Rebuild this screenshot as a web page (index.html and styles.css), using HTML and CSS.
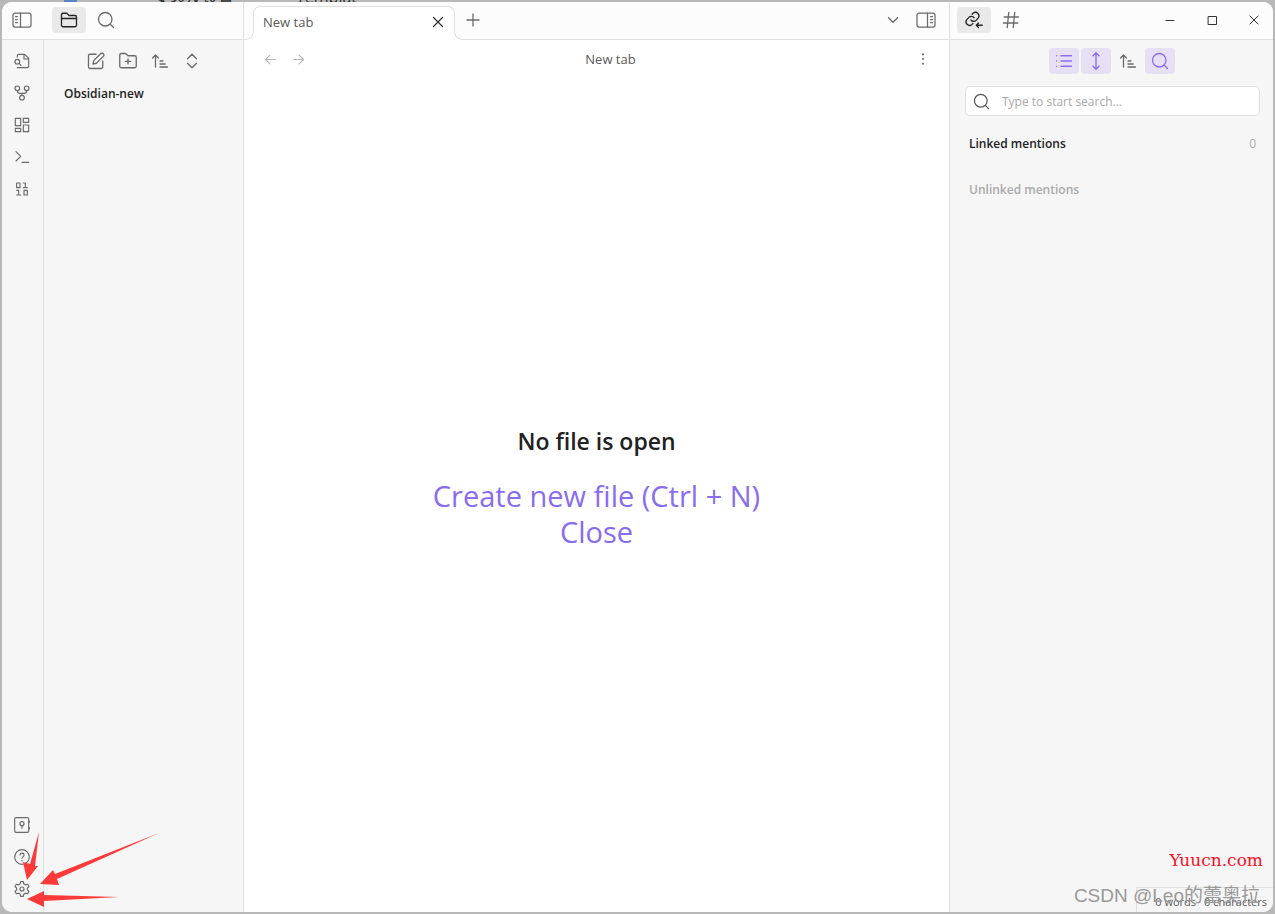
FILE: index.html
```html
<!DOCTYPE html>
<html lang="en">
<head>
<meta charset="utf-8">
<title>New tab - Obsidian-new</title>
<link rel="stylesheet" href="styles.css">
</head>
<body>
<svg class="sprite" aria-hidden="true">
  <symbol id="search" viewBox="0 0 24 24"><circle cx="11" cy="11" r="9"/><path d="m22 22-4.5-4.5"/></symbol>
  <symbol id="sort" viewBox="0 0 24 24"><path d="m2 8 4-4 4 4M6 4v16M12 12h4M12 16h7M12 20h10"/></symbol>
  <symbol id="close" viewBox="0 0 24 24"><path d="M18 6 6 18M6 6l12 12"/></symbol>
</svg>
<div class="desktop" aria-hidden="true"><i class="behind-window"></i><span class="behind-file">安装及设置</span><span class="behind-tab">Templat</span></div>
<div class="app">
  <section class="left">
    <header class="bar left-bar">
      <button class="icon panel" aria-label="Collapse left sidebar"><svg viewBox="0 0 20 18"><rect x="1" y="2" width="18" height="14" rx="2"/><path d="M8.500 2v14M3.500 5.500h2M3.500 8.500h2M3.500 11.500h2"/></svg></button>
      <button class="icon tab-icon active" aria-label="Files"><svg viewBox="0 0 24 24"><path d="M2 10h20M4 21h16a2 2 0 0 0 2-2V8a2 2 0 0 0-2-2h-8l-2-2.200A2 2 0 0 0 8.500 3H4a2 2 0 0 0-2 2v14a2 2 0 0 0 2 2Z"/></svg></button>
      <button class="icon tab-icon" aria-label="Search"><svg><use href="#search"/></svg></button>
    </header>
    <div class="left-body">
      <nav class="ribbon">
        <button class="icon" aria-label="Open quick switcher"><svg viewBox="0 0 24 24"><path d="M5 6V4a2 2 0 0 1 2-2h9l6 6v12a2 2 0 0 1-2 2H5M15 2v7h7M8 16l2.500 2.500"/><circle cx="5" cy="13" r="3.500"/></svg></button>
        <button class="icon" aria-label="Open graph view"><svg viewBox="0 0 24 24"><circle cx="12" cy="19" r="3.500"/><circle cx="5" cy="5" r="3.500"/><circle cx="19" cy="5" r="3.500"/><path d="M5 8.500c0 3 1 4 4 4h6c3 0 4-1 4-4M12 12.500v3"/></svg></button>
        <button class="icon" aria-label="Create new canvas"><svg viewBox="0 0 24 24"><path d="M2 2h8v11H2zM14 2h8v6h-8zM14 12h8v10h-8zM2 17h8v5H2z"/></svg></button>
        <button class="icon" aria-label="Open command palette"><svg viewBox="0 0 24 24"><path d="m3 18 7-7-7-7M12 20h10"/></svg></button>
        <button class="icon" aria-label="Insert template"><svg viewBox="0 0 24 24"><path d="M4 3h5v7H4zM15 14h5v7h-5zM4 21h6M4 14h3v7M14 10h6M14 3h3v7"/></svg></button>
        <span class="spacer"></span>
        <button class="icon" aria-label="Open another vault"><svg viewBox="0 0 24 24"><rect x="1" y="1" width="21" height="22" rx="2"/><circle cx="12" cy="10" r="3"/><path d="M12 13v4M23 6v2M23 16v2"/></svg></button>
        <button class="icon" aria-label="Help"><svg viewBox="0 0 24 24"><circle cx="12" cy="12" r="11"/><path d="M9 9a3 3 0 0 1 6 .500c0 2-3 2.500-3 4.500M12 17v1"/></svg></button>
        <button class="icon" aria-label="Settings"><svg viewBox="0 0 24 24"><path d="M10 1h4l.8 3.500 2.200 1.300 3.500-1 2 3.500-2.500 2.500v2.400l2.500 2.500-2 3.500-3.500-1-2.200 1.300L14 23h-4l-.8-3.500L7 18.200l-3.500 1-2-3.500L4 13.200v-2.400L1.500 8.300l2-3.500 3.500 1 2.200-1.300Z"/><circle cx="12" cy="12" r="3"/></svg></button>
      </nav>
      <div class="files">
        <div class="tools">
          <button class="icon" aria-label="New note"><svg viewBox="0 0 24 24"><path d="M12 3H4a2 2 0 0 0-2 2v15a2 2 0 0 0 2 2h15a2 2 0 0 0 2-2v-8M18.500 2a2.500 2.500 0 0 1 3.500 3.500L12.500 15 8 16l1-4.500Z"/></svg></button>
          <button class="icon" aria-label="New folder"><svg viewBox="0 0 24 24"><path d="M3 21h18a2 2 0 0 0 2-2V7a2 2 0 0 0-2-2h-9l-2-2.200A2 2 0 0 0 8.500 2H3a2 2 0 0 0-2 2v15a2 2 0 0 0 2 2ZM12 9v7M8.500 12.500h7"/></svg></button>
          <button class="icon" aria-label="Change sort order"><svg><use href="#sort"/></svg></button>
          <button class="icon" aria-label="Expand all"><svg viewBox="0 0 24 24"><path d="m6 9 6-6 6 6M6 15l6 6 6-6"/></svg></button>
        </div>
        <h2 class="vault">Obsidian-new</h2>
      </div>
    </div>
  </section>

  <main class="main">
    <header class="bar main-bar">
      <div class="tab"><span>New tab</span><button class="icon tab-close" aria-label="Close tab"><svg><use href="#close"/></svg></button></div>
      <button class="icon" aria-label="New tab"><svg viewBox="0 0 24 24"><path d="M12 4v16M4 12h16"/></svg></button>
      <span class="spacer"></span>
      <button class="icon" aria-label="Tab list"><svg viewBox="0 0 24 24"><path d="m6 9 6 6 6-6"/></svg></button>
      <button class="icon panel" aria-label="Collapse right sidebar"><svg viewBox="0 0 20 18"><rect x="1" y="2" width="18" height="14" rx="2"/><path d="M11.500 2v14M14.500 5.500h2M14.500 8.500h2M14.500 11.500h2"/></svg></button>
    </header>
    <div class="view-header">
      <button class="icon faint" aria-label="Back"><svg viewBox="0 0 24 24"><path d="m11 19-7-7 7-7M20 12H4"/></svg></button>
      <button class="icon faint" aria-label="Forward"><svg viewBox="0 0 24 24"><path d="m13 5 7 7-7 7M4 12h16"/></svg></button>
      <span class="view-title">New tab</span>
      <button class="icon more" aria-label="More options"><svg viewBox="0 0 24 24"><path d="M12 5v.1M12 12v.1M12 19v.1"/></svg></button>
    </div>
    <div class="empty">
      <h1>No file is open</h1>
      <a href="#new">Create new file (Ctrl + N)</a>
      <a href="#close-tab">Close</a>
    </div>
  </main>

  <aside class="right">
    <header class="bar right-bar">
      <button class="icon tab-icon active" aria-label="Backlinks"><svg viewBox="0 0 24 24"><path d="M8 12a4.500 4.500 0 0 0 6.800.500l2.700-3A4.700 4.700 0 0 0 11 2.800L9.500 4.300M12 9a4.500 4.500 0 0 0-6.800-.500l-2.700 3A4.700 4.700 0 0 0 9 18.200l1.500-1.500M23 19h-8M18 16l-3 3 3 3"/></svg></button>
      <button class="icon tab-icon" aria-label="Tags"><svg viewBox="0 0 24 24"><path d="M3 8h19M2 16h19M9 2 7 22M17 2l-2 20"/></svg></button>
      <span class="spacer"></span>
      <button class="win" aria-label="Minimize"><svg viewBox="0 0 12 12"><path d="M2 6.500h8"/></svg></button>
      <button class="win" aria-label="Maximize"><svg viewBox="0 0 12 12"><path d="M2.500 2.500h8v8h-8z"/></svg></button>
      <button class="win" aria-label="Close window"><svg viewBox="0 0 12 12"><path d="m2 2 8 8M10 2l-8 8"/></svg></button>
    </header>
    <div class="tools links-tools">
      <button class="icon on" aria-label="Collapse results"><svg viewBox="0 0 24 24"><path d="M8 5h14M8 12h14M8 19h14M2 5h.1M2 12h.1M2 19h.1"/></svg></button>
      <button class="icon on" aria-label="Show more context"><svg viewBox="0 0 24 24"><path d="M12 1v22M8 5l4-4 4 4M8 19l4 4 4-4"/></svg></button>
      <button class="icon" aria-label="Change sort order"><svg><use href="#sort"/></svg></button>
      <button class="icon on" aria-label="Show search filter"><svg><use href="#search"/></svg></button>
    </div>
    <label class="search"><svg class="search-icon"><use href="#search"/></svg><input type="text" placeholder="Type to start search..." aria-label="Search backlinks"></label>
    <div class="mentions"><span>Linked mentions</span><span class="count">0</span></div>
    <div class="mentions muted"><span>Unlinked mentions</span></div>
    <footer class="status"><span>0 words</span><span>0 characters</span></footer>
  </aside>
</div>
<svg class="arrows" viewBox="0 0 180 114" aria-hidden="true"><path d="M39 32 35 66h3L27 80 23 62l7 2ZM159 33 57 79l2 6-19-1 13-14 2 4ZM119 97 44 101v6L27 99l17-8v4Z"/></svg>
<div class="mark-site">Yuucn.com</div>
<div class="mark-author">CSDN @Leo的蕾奥拉</div>
</body>
</html>
```
FILE: styles.css
```css
* { box-sizing: border-box; }
body {
  margin: 0;
  padding: 2px;
  height: 100vh;
  background: #b8b8b8;
  color: #222;
  font: 13px/20px "Open Sans", "Noto Sans CJK SC", sans-serif;
  overflow: hidden;
}
button { border: 0; padding: 0; background: none; color: inherit; font: inherit; }
h1, h2 { margin: 0; }
svg { fill: none; stroke: currentColor; stroke-width: 1.75; stroke-linecap: round; stroke-linejoin: round; }
.sprite { position: absolute; width: 0; height: 0; }

/* Sliver of the window behind, above the rounded frame */
.desktop { position: absolute; inset: 0 0 auto 0; height: 2px; overflow: hidden; font-size: 16px; color: #333; }
.desktop span { position: absolute; bottom: -5px; }
.behind-window { position: absolute; left: 64px; width: 13px; height: 2px; background: #5b84c4; }
.behind-file { left: 154px; }
.behind-tab { left: 296px; }

.app { position: relative; display: flex; height: 100%; border-radius: 10px; overflow: hidden; background: #fff; }
.spacer { flex: 1; }
.bar { display: flex; align-items: center; height: 38px; flex: none; padding-bottom: 2px; background: #fcfcfc; border-bottom: 1px solid #e0e0e0; }
.icon { display: flex; align-items: center; justify-content: center; width: 30px; height: 26px; border-radius: 4px; color: #6a6a6a; flex: none; }
.icon svg { width: 18px; height: 18px; }
.panel svg { width: 20px; stroke-width: 1.25; }

.left { display: flex; flex-direction: column; width: 242px; flex: none; background: #f6f6f6; border-right: 1px solid #e0e0e0; }
.left-bar { padding-left: 5px; gap: 3px; }
.left-bar .panel { margin-right: 12px; }
.tab-icon { width: 34px; }
.active { background: #e9e9e9; color: #222; }
.left-body { display: flex; flex: 1; }
.ribbon { display: flex; flex-direction: column; align-items: center; gap: 6px; width: 42px; padding: 8px 2px 10px 0; border-right: 1px solid #e0e0e0; }
.ribbon svg { width: 16px; height: 16px; }
.files { flex: 1; }
.tools { display: flex; justify-content: center; gap: 2px; padding-top: 8px; }
.files .tools { padding-left: 1px; }
.vault { margin: 10px 20px; font-size: 12px; line-height: 20px; font-weight: 600; }

.main { display: flex; flex-direction: column; flex: 1; min-width: 0; }
.main-bar { padding-left: 9px; padding-right: 8px; gap: 3px; }
.tab { position: relative; display: flex; align-items: center; justify-content: space-between; align-self: flex-end; width: 202px; height: 34px; margin-bottom: -3px; padding: 0 1px 3px 9px; background: #fff; border: 1px solid #e0e0e0; border-bottom: 0; border-radius: 7px 7px 0 0; color: #5a5a5a; }
/* Curved feet joining the tab to the bar's bottom line */
.tab::before, .tab::after { content: ""; position: absolute; bottom: 0; width: 7px; height: 7px; }
.tab::before { left: -7px; background: radial-gradient(circle at 0 0, #fcfcfc 5px, #e0e0e0 6px, #fff 7px); }
.tab::after { right: -7px; background: radial-gradient(circle at 100% 0, #fcfcfc 5px, #e0e0e0 6px, #fff 7px); }
.tab-close { color: #333; }
.view-header { display: flex; align-items: center; height: 38px; padding: 0 12px; }
.view-header .icon { width: 28px; }
.view-header svg { width: 15px; height: 15px; }
.view-header .more svg { width: 16px; height: 16px; stroke-width: 3; }
.faint { color: #b5b5b5; }
.view-title { flex: 1; text-align: center; color: #5a5a5a; }
.empty { display: flex; flex: 1; flex-direction: column; align-items: center; justify-content: center; padding-bottom: 17px; font-size: 29px; line-height: 36px; }
.empty h1 { margin-bottom: 19px; font-size: 23px; line-height: 36px; font-weight: 600; }
.empty a { color: #8a6cf0; text-decoration: none; }

.right { display: flex; flex-direction: column; width: 324px; flex: none; background: #f6f6f6; border-left: 1px solid #e0e0e0; }
.right-bar { padding-left: 7px; gap: 3px; }
.win { display: flex; align-items: center; justify-content: center; width: 39px; height: 36px; color: #333; }
.win svg { width: 12px; height: 12px; stroke-width: 1; }
.links-tools { padding-bottom: 12px; }
.on { background: #e6e0f5; color: #8a6cf0; }
.search { display: flex; align-items: center; height: 30px; margin: 0 13px 0 15px; padding: 0 8px 0 7px; gap: 12px; background: #fff; border: 1px solid #e0e0e0; border-radius: 5px; color: #555; }
.search-icon { width: 17px; height: 17px; flex: none; }
.search input { flex: 1; min-width: 0; border: 0; padding: 2px 0 0; outline: 0; background: none; font: inherit; font-size: 12px; }
.search input::placeholder { color: #a8a8a8; opacity: 1; }
.mentions { display: flex; justify-content: space-between; margin: 18px 17px 8px 19px; font-size: 12px; font-weight: 600; }
.mentions.muted { color: #aaa; }
.count { color: #aaa; font-weight: 400; }
.status { display: flex; gap: 8px; align-self: flex-end; margin-top: auto; padding: 4px 6px 0 18px; border: 1px solid #e0e0e0; border-width: 1px 0 0 1px; color: #5a5a5a; font-size: 11px; }

.arrows { position: absolute; left: 0; bottom: 0; width: 180px; height: 114px; fill: #fd3a3a; stroke: none; }
.mark-site { position: absolute; right: 12px; bottom: 42px; color: #fb0f27; font: 17px/24px "DejaVu Serif", serif; }
.mark-author { position: absolute; right: 15px; bottom: 6px; color: #999; font: 19px/24px "Liberation Sans", "Noto Sans CJK SC", sans-serif; }
```
